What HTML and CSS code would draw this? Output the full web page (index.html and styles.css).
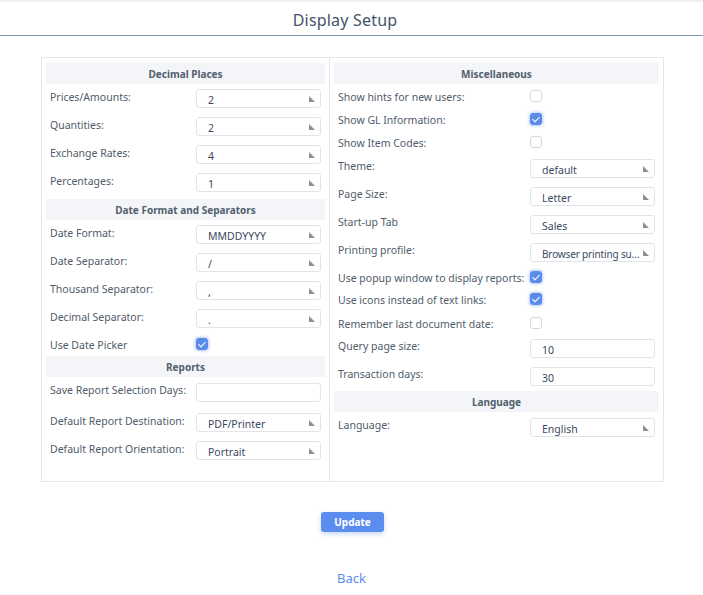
FILE: index.html
```html
<!DOCTYPE html>
<html>
<head>
<meta charset="utf-8">
<title>Display Setup</title>
<link rel="stylesheet" href="styles.css">
</head>
<body>
<header class="topbar"><h1 class="title">Display Setup</h1></header>
<main class="setup">
  <section class="col col-left">
    <div class="sec-head">Decimal Places</div>
    <div class="row"><span class="lbl">Prices/Amounts:</span><div class="sel">2</div></div>
    <div class="row"><span class="lbl">Quantities:</span><div class="sel">2</div></div>
    <div class="row"><span class="lbl">Exchange Rates:</span><div class="sel">4</div></div>
    <div class="row"><span class="lbl">Percentages:</span><div class="sel">1</div></div>
    <div class="sec-head">Date Format and Separators</div>
    <div class="row"><span class="lbl">Date Format:</span><div class="sel">MMDDYYYY</div></div>
    <div class="row"><span class="lbl">Date Separator:</span><div class="sel">/</div></div>
    <div class="row"><span class="lbl">Thousand Separator:</span><div class="sel">,</div></div>
    <div class="row"><span class="lbl">Decimal Separator:</span><div class="sel">.</div></div>
    <div class="row row-chk row-chk-l"><span class="lbl">Use Date Picker</span><div class="ctl"><span class="chk on"></span></div></div>
    <div class="sec-head">Reports</div>
    <div class="row row-days"><span class="lbl">Save Report Selection Days:</span><div class="inp"></div></div>
    <div class="row"><span class="lbl">Default Report Destination:</span><div class="sel">PDF/Printer</div></div>
    <div class="row"><span class="lbl">Default Report Orientation:</span><div class="sel">Portrait</div></div>
  </section>
  <section class="col col-right">
    <div class="sec-head">Miscellaneous</div>
    <div class="row row-chk row-chk-t"><span class="lbl">Show hints for new users:</span><div class="ctl"><span class="chk"></span></div></div>
    <div class="row row-chk row-chk-t"><span class="lbl">Show GL Information:</span><div class="ctl"><span class="chk on"></span></div></div>
    <div class="row row-chk row-chk-t"><span class="lbl">Show Item Codes:</span><div class="ctl"><span class="chk"></span></div></div>
    <div class="row row-r"><span class="lbl">Theme:</span><div class="sel">default</div></div>
    <div class="row row-r"><span class="lbl">Page Size:</span><div class="sel">Letter</div></div>
    <div class="row row-r"><span class="lbl">Start-up Tab</span><div class="sel">Sales</div></div>
    <div class="row row-r"><span class="lbl">Printing profile:</span><div class="sel"><span class="sel-trunc">Browser printing su…</span></div></div>
    <div class="row row-chk"><span class="lbl">Use popup window to display reports:</span><div class="ctl"><span class="chk on"></span></div></div>
    <div class="row row-chk row-chk-m"><span class="lbl">Use icons instead of text links:</span><div class="ctl"><span class="chk on"></span></div></div>
    <div class="row row-chk"><span class="lbl">Remember last document date:</span><div class="ctl"><span class="chk"></span></div></div>
    <div class="row row-r"><span class="lbl">Query page size:</span><div class="inp">10</div></div>
    <div class="row row-r"><span class="lbl">Transaction days:</span><div class="inp">30</div></div>
    <div class="sec-head sec-head-tight">Language</div>
    <div class="row row-r"><span class="lbl">Language:</span><div class="sel">English</div></div>
  </section>
</main>
<div class="actions"><button class="btn">Update</button></div>
<div class="back"><a href="#" class="back-link">Back</a></div>
</body>
</html>
```
FILE: styles.css
```css
* { box-sizing: border-box; }
body {
  margin: 0;
  font-family: "Noto Sans", "Open Sans", sans-serif;
  color: #4a5568;
  background: #fff;
}
.topbar {
  border-top: 2px solid #eef0f3;
  border-bottom: 1px solid #7d93a8;
  height: 36px;
  display: flex;
  align-items: center;
  justify-content: center;
  padding: 2px 13px 0 0;
}
.title {
  margin: 0;
  font-size: 16px;
  font-weight: 400;
  color: #435368;
  letter-spacing: 0.2px;
}
.setup {
  width: 623px;
  margin: 21px 0 0 41px;
  border: 1px solid #e2e7ef;
  display: grid;
  grid-template-columns: 288px 1fr;
  height: 425px;
}
.col {
  display: flex;
  flex-direction: column;
  padding: 5px 4px 0 4px;
}
.col-left { border-right: 1px solid #e2e7ef; }
.sec-head {
  height: 21px;
  background: #f3f5f8;
  display: flex;
  align-items: center;
  justify-content: center;
  font-size: 10px;
  font-weight: 700;
  color: #52606f;
  flex: none;
}
.row + .sec-head { margin-top: 3px; }
.row-chk + .sec-head { margin-top: 2px; }
.row + .sec-head-tight { margin-top: 2px; }
.row {
  height: 28px;
  display: flex;
  align-items: flex-start;
  flex: none;
}
.row-days { height: 31px; }
.row-days .inp { margin-top: 6px; }
.lbl {
  flex: 1;
  padding: 6px 0 0 4px;
  font-size: 10.5px;
  line-height: 14px;
  color: #4f5c6b;
  white-space: nowrap;
}
.sel, .inp {
  width: 125px;
  height: 19px;
  margin: 5px 4px 0 0;
  border: 1px solid #e1e5ea;
  border-radius: 3px;
  font-size: 10.5px;
  color: #3c4a5e;
  padding: 4px 14px 0 11px;
  line-height: 13px;
  position: relative;
  white-space: nowrap;
  overflow: hidden;
}
.inp { padding-right: 8px; }
.row-r .sel, .row-r .inp { margin-top: 6px; }
.sel::after {
  content: "";
  position: absolute;
  right: 5px;
  top: 6px;
  width: 6px;
  height: 6px;
  background: #8a8f96;
  clip-path: polygon(0 0, 0 100%, 100% 100%);
}
.sel-trunc {
  font-size: 10px;
  letter-spacing: -0.15px;
}
.row-chk { height: 22px; }
.row-chk-t { height: 23px; }
.row-chk-m { height: 24px; }
.ctl { width: 125px; margin-right: 4px; padding-top: 6px; }
.chk {
  display: block;
  width: 12px;
  height: 12px;
  border: 1px solid #d4d9e0;
  border-radius: 3px;
  background: #fff;
  position: relative;
}
.chk.on {
  background: #5a8bea;
  border-color: #5a8bea;
  box-shadow: 0 0 3px 1px rgba(90, 139, 234, 0.45);
}
.chk.on::after {
  content: "";
  position: absolute;
  left: 3px;
  top: 1px;
  width: 3px;
  height: 6px;
  border: solid #fff;
  border-width: 0 1.3px 1.3px 0;
  transform: rotate(45deg);
}
.actions {
  display: flex;
  justify-content: center;
  margin-top: 30px;
}
.btn {
  width: 63px;
  height: 20px;
  border: none;
  border-radius: 3px;
  background: #5b8def;
  color: #fff;
  font-family: "Noto Sans", sans-serif;
  font-weight: 700;
  font-size: 10px;
  padding: 0;
  box-shadow: 0 2px 5px rgba(91, 141, 239, 0.35);
  margin-left: 2px;
}
.back {
  text-align: center;
  margin-top: 34px;
}
.back-link {
  color: #5b8def;
  font-size: 13px;
  text-decoration: none;
}
```
